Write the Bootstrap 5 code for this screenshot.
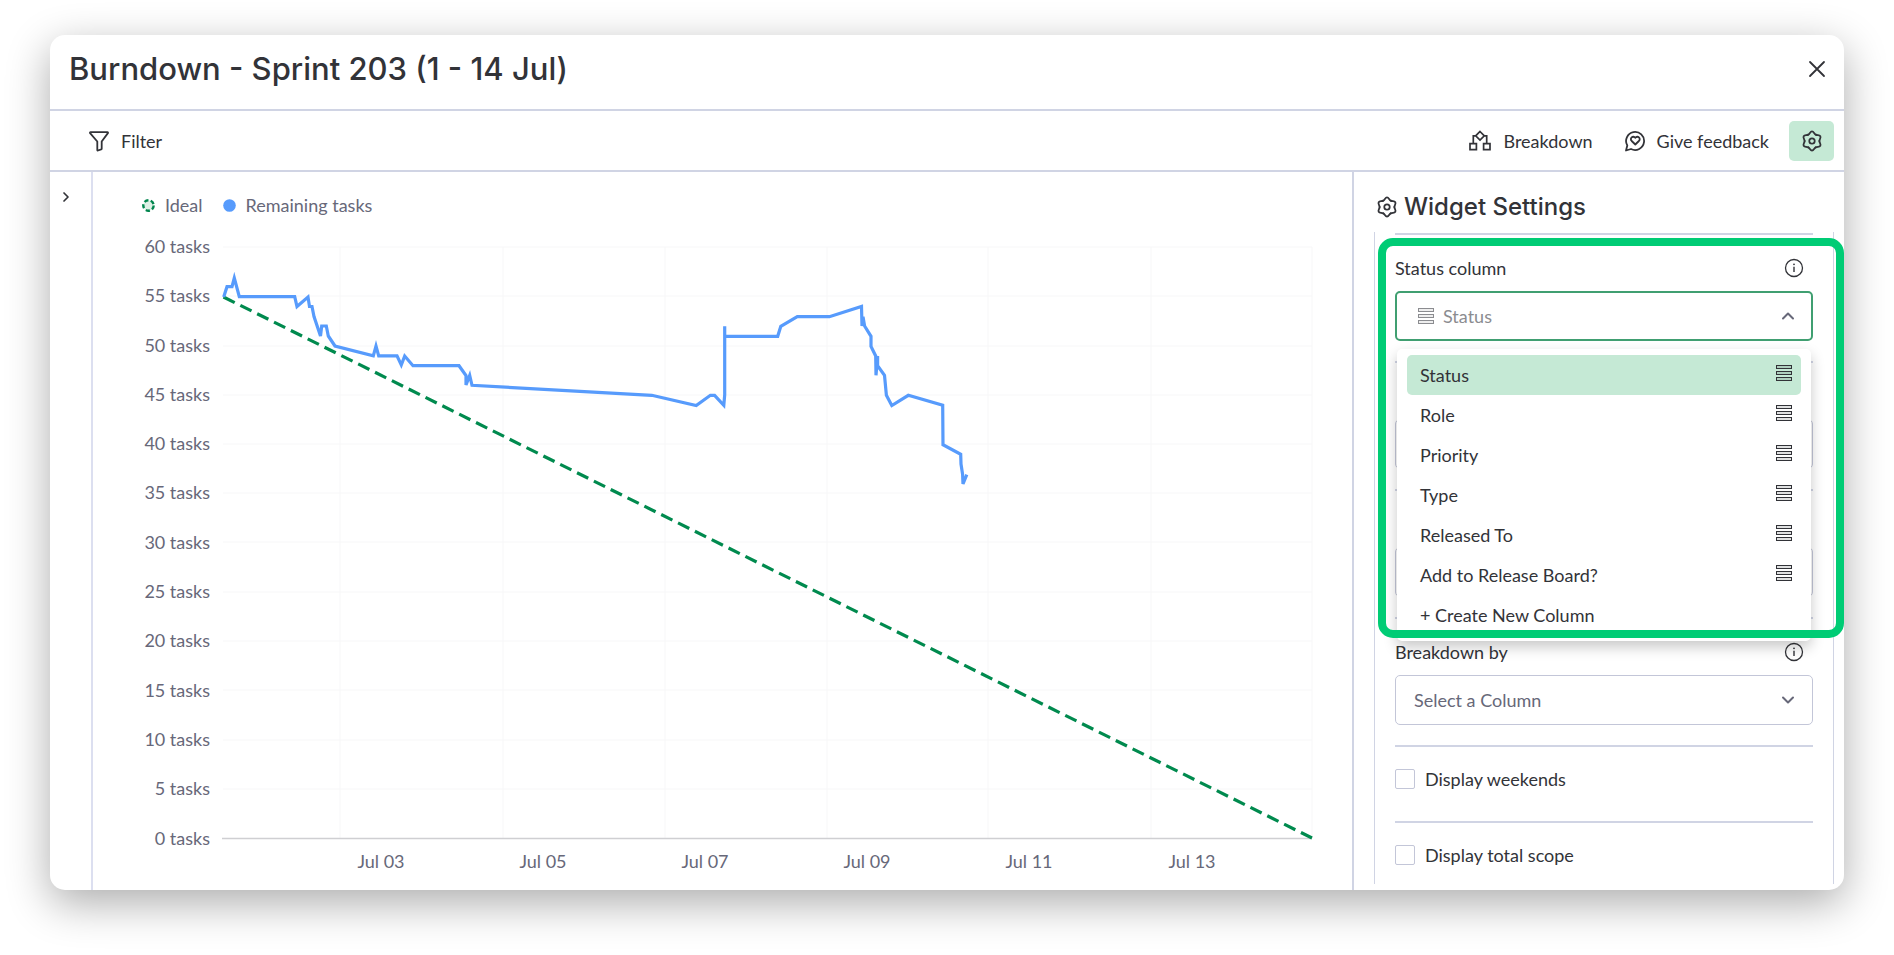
<!DOCTYPE html>
<html lang="en">
<head>
<meta charset="utf-8">
<meta name="viewport" content="width=device-width, initial-scale=1">
<title>Burndown - Sprint 203</title>
<link href="https://cdn.jsdelivr.net/npm/bootstrap@5.3.0/dist/css/bootstrap.min.css" rel="stylesheet">
<style>
  :root { --ink: #323338; --muted: #676879; --line: #d0d4e4; --line-strong: #c3c6d8; --pick: #c5e9d5; --ring: #00cc75; }
  body { font-family: Lato, "Open Sans", sans-serif; font-size: 18px; line-height: 22px; color: var(--ink); background: #fff; }
  .stage { min-height: 100vh; padding: 35px 50px 65px; }
  .widget { background: #fff; border-radius: 15px; box-shadow: 0 13px 44px rgba(0, 0, 0, .33); }
  .heading-font { font-family: Inter, "Open Sans", sans-serif; font-weight: 500; }
  .title-bar { padding: 0 17px 6px 19px; height: 76px; border-bottom: 2px solid var(--line); }
  .title-bar h1 { font-size: 31px; line-height: 40px; margin-bottom: 0; }
  .toolbar { padding: 10px 10px 9px 39px; border-bottom: 2px solid var(--line); }
  .plain { display: inline-flex; align-items: center; border: 0; padding: 0; background: none; color: inherit; }
  .tool-actions .plain { gap: 12px; }
  .gear-btn { width: 45px; height: 40px; border-radius: 5px; background: var(--pick); justify-content: center; }
  .rail { width: 43px; border-right: 2px solid #dcdff0; padding: 13px 10px; }
  .chart-pane { min-width: 0; flex-basis: 0; }
  .legend-row { padding: 22px 49px 14px; gap: 20px; color: var(--muted); }
  .legend-row span { display: flex; align-items: center; gap: 10px; }
  .chart-pane svg text { fill: var(--muted); font-size: 18px; }
  .settings { width: 492px; border-left: 2px solid var(--line); }
  .settings h2 { font-size: 24px; line-height: 30px; padding: 20px 20px 10px 22px; gap: 6px; }
  .scroll-box { margin: 0 10px 6px 20px; padding: 1px 20px 0; border: solid var(--line); border-width: 0 1px; }
  .field { position: relative; height: 128px; border-top: 2px solid var(--line); padding-top: 22px; }
  .field-label { padding-right: 9px; margin-bottom: 12px; }
  .field .form-select { height: 50px; border: 1px solid var(--line-strong); border-radius: 5px; padding: 0 40px 0 18px; font-size: 18px; line-height: 22px; color: var(--muted);
    background-image: url("data:image/svg+xml,%3csvg xmlns='http://www.w3.org/2000/svg' viewBox='0 0 14 14' fill='none' stroke='%23676879' stroke-width='2' stroke-linecap='round' stroke-linejoin='round'%3e%3cpath d='M2 4.500l5 5 5-5'/%3e%3c/svg%3e");
    background-size: 14px 14px; background-position: right 17px center; }
  .field .form-select.opened { border: 2px solid #409f71; padding-left: 46px; color: #8b8c90;
    background-image: url("data:image/svg+xml,%3csvg xmlns='http://www.w3.org/2000/svg' viewBox='0 0 14 14' fill='none' stroke='%23676879' stroke-width='2' stroke-linecap='round' stroke-linejoin='round'%3e%3cpath d='M2 9.500l5-5 5 5'/%3e%3c/svg%3e"); background-position: right 16px center; }
  .in-select { position: absolute; left: 23px; top: 73px; color: #8b8c90; }
  .dropdown-menu.picker { left: 2px; right: 2px; top: 114px; margin: 0; border: 0; border-radius: 5px; padding: 6px 10px 0; height: 292px; font-size: 18px; box-shadow: 0 6px 14px rgba(0, 0, 0, .22); overflow: hidden; }
  .picker .dropdown-item { display: flex; justify-content: space-between; align-items: flex-start; height: 40px; padding: 9px 9px 9px 13px; line-height: 22px; color: var(--ink); border-radius: 5px; }
  .picker .dropdown-item svg { margin-top: 1px; }
  .picker .dropdown-item.active { background: var(--pick); }
  .highlight { position: absolute; z-index: 1010; left: -17px; right: -31px; top: 3px; height: 400px; border: 8px solid var(--ring); border-radius: 15px; pointer-events: none; }
  .check-row { height: 76px; border-top: 2px solid var(--line); padding-top: 21px; gap: 10px; }
  .check-row:last-child { height: 62px; }
  .check-row .form-check-input { width: 20px; height: 20px; margin: 1px 0 0; border: 1px solid var(--line-strong); border-radius: 2px; }
</style>
<script src="https://cdn.jsdelivr.net/npm/bootstrap@5.3.0/dist/js/bootstrap.bundle.min.js"></script>
</head>
<body>
<svg width="0" height="0" class="position-absolute" aria-hidden="true">
  <defs>
    <path id="cog-lobe" d="M-3.700-6.400C-2-7.400-1.800-9.600 0-9.600S2-7.400 3.700-6.400"/>
    <symbol id="i-cog" viewBox="-11 -11 22 22">
      <g fill="none" stroke="currentColor" stroke-width="1.800" stroke-linecap="round">
        <use href="#cog-lobe"/><use href="#cog-lobe" transform="rotate(60)"/><use href="#cog-lobe" transform="rotate(120)"/>
        <use href="#cog-lobe" transform="rotate(180)"/><use href="#cog-lobe" transform="rotate(240)"/><use href="#cog-lobe" transform="rotate(300)"/>
        <circle r="2.700"/>
      </g>
    </symbol>
    <symbol id="i-rows" viewBox="0 0 16 16">
      <g fill="currentColor" fill-opacity=".15" stroke="currentColor" stroke-width="1">
        <rect x=".5" y=".5" width="15" height="3"/><rect x=".5" y="6.500" width="15" height="3"/><rect x=".5" y="12.500" width="15" height="3"/>
      </g>
    </symbol>
    <symbol id="i-info" viewBox="0 0 20 20">
      <circle cx="10" cy="10" r="8.500" fill="none" stroke="currentColor" stroke-width="1.300"/>
      <path d="M10 8.700v5.300" stroke="currentColor" stroke-width="1.400"/><circle cx="10" cy="6.300" r=".9" fill="currentColor"/>
    </symbol>
  </defs>
</svg>

<div class="stage d-flex flex-column">
  <main class="widget flex-grow-1 d-flex flex-column">
    <header class="title-bar d-flex align-items-center justify-content-between">
      <h1 class="heading-font">Burndown - Sprint 203 (1 - 14 Jul)</h1>
      <button class="plain" type="button" aria-label="Close">
        <svg width="20" height="20" viewBox="0 0 20 20" fill="none" stroke="currentColor" stroke-width="1.800" stroke-linecap="round"><path d="M3 3l14 14M17 3L3 17"/></svg>
      </button>
    </header>

    <div class="toolbar d-flex align-items-center justify-content-between">
      <button class="plain gap-2" type="button">
        <svg width="20" height="22" viewBox="0 0 20 22" fill="none" stroke="currentColor" stroke-width="1.800" stroke-linejoin="round"><path d="M1.500 2.200h17c.5 0 .7.500.4.900L12.700 11.500v7.200c0 .4-.2.600-.5.700l-3.200 1.100c-.4.100-.7-.1-.7-.5v-8.500L1.100 3.100c-.3-.4-.1-.9.400-.9z"/></svg>
        <span class="ms-1">Filter</span>
      </button>
      <div class="tool-actions d-flex align-items-center">
        <button class="plain me-4" type="button">
          <svg width="22" height="22" viewBox="0 0 22 22" fill="none" stroke="currentColor" stroke-width="1.700"><path d="M11 1.500l4.300 4.300L11 10.100 6.700 5.800zM6.700 5.800H4.300v7.800M15.300 5.800h2.400v7.800M1 13.600h6.400v6H1zM14.600 13.600H21v6h-6.400z"/></svg>
          <span>Breakdown</span>
        </button>
        <button class="plain ms-2 me-3" type="button">
          <svg width="20" height="22" viewBox="0 0 20 22" fill="none" stroke="currentColor" stroke-width="1.800" stroke-linecap="round" stroke-linejoin="round"><path d="M1 20.500l1.300-5A9 9 0 1 1 6 19z"/><path d="M10.300 14.500L6.700 11c-2.500-2.700 1.300-6 3.600-3.200 2.300-2.800 6.100.5 3.600 3.200z"/></svg>
          <span>Give feedback</span>
        </button>
        <button class="plain gear-btn ms-1" type="button" aria-label="Settings"><svg width="22" height="22"><use href="#i-cog"/></svg></button>
      </div>
    </div>

    <div class="d-flex flex-grow-1">
      <div class="rail">
        <button class="plain" type="button" aria-label="Expand">
          <svg width="12" height="12" viewBox="0 0 12 12" fill="none" stroke="currentColor" stroke-width="1.700" stroke-linecap="round" stroke-linejoin="round"><path d="M4 2l4 4-4 4"/></svg>
        </button>
      </div>

      <section class="chart-pane flex-grow-1">
        <div class="legend-row d-flex">
          <span><svg width="13" height="13" viewBox="0 0 13 13"><circle cx="6.500" cy="6.500" r="5.200" fill="#dff0e6" stroke="#00854d" stroke-width="2.400" stroke-dasharray="4.200 2.334"/></svg>Ideal</span>
          <span><svg width="13" height="13" viewBox="0 0 13 13"><circle cx="6.500" cy="6.500" r="6.300" fill="#579bfc"/></svg>Remaining tasks</span>
        </div>
        <svg class="d-block w-100" viewBox="93 230 1259 659" role="img" aria-label="Remaining tasks against the ideal line">
          <path d="M223 247H1312M223 296H1312M223 346H1312M223 395H1312M223 444H1312M223 493H1312M223 542H1312M223 592H1312M223 641H1312M223 690H1312M223 740H1312M223 789H1312M340 247V838M503 247V838M665 247V838M827 247V838M988 247V838M1151 247V838M1312 247V838" stroke="#f7f7f8" stroke-width="1" fill="none"/>
          <path d="M222 838.500H1312" stroke="#cfcfd2" stroke-width="1.500"/>
          <path d="M223.500 297L1312 838" stroke="#008a4e" stroke-width="3.200" stroke-dasharray="12.500 6.300"/>
          <polyline fill="none" stroke="#579bfc" stroke-width="3.200" points="223.700,297 227,286.700 232,286.700 234.300,278 239.300,296.700 294.700,296.700 297,306.500 308,297 309.500,306.500 312,306.500 314,316.500 320.500,336 321.700,326 326.300,326 328.300,336 335,346 373.300,355.800 376,346 378.700,355.800 397,355.800 401.300,365 404.700,356 413,365.700 459,365.700 466,375.500 466,385 469.700,375.500 472,385.300 651.800,395.300 696.200,405.500 710.400,395.300 714.600,395.300 723.800,405.300 724.700,395 724.700,326.300 724.700,336.300 777.700,336.300 780.800,326.300 797.300,316.700 829.400,316.700 861.500,306.500 862,326 863,316.700 864.600,326 871,336.300 871,346.500 875.700,356 876,375.300 877.600,356 877.600,365.700 884.500,375.300 886.400,395.300 891.800,405.500 908.300,395.300 942.700,405.300 943,444.700 960.700,454.300 961,464 962.600,474.300 963,484 966.800,474.700"/>
          <g text-anchor="end">
            <text x="210" y="253">60 tasks</text><text x="210" y="302">55 tasks</text><text x="210" y="352">50 tasks</text>
            <text x="210" y="401">45 tasks</text><text x="210" y="450">40 tasks</text><text x="210" y="499">35 tasks</text>
            <text x="210" y="549">30 tasks</text><text x="210" y="598">25 tasks</text><text x="210" y="647">20 tasks</text>
            <text x="210" y="697">15 tasks</text><text x="210" y="746">10 tasks</text><text x="210" y="795">5 tasks</text>
            <text x="210" y="845">0 tasks</text>
          </g>
          <g text-anchor="middle">
            <text x="381" y="868">Jul 03</text><text x="543" y="868">Jul 05</text><text x="705" y="868">Jul 07</text>
            <text x="867" y="868">Jul 09</text><text x="1029" y="868">Jul 11</text><text x="1192" y="868">Jul 13</text>
          </g>
        </svg>
      </section>

      <aside class="settings flex-shrink-0 d-flex flex-column">
        <h2 class="heading-font d-flex align-items-center mb-0"><svg width="22" height="22"><use href="#i-cog"/></svg>Widget Settings</h2>
        <form class="scroll-box flex-grow-1">
          <div class="field">
            <div class="field-label d-flex justify-content-between align-items-center">
              <label for="status-column">Status column</label><svg width="20" height="20"><use href="#i-info"/></svg>
            </div>
            <select id="status-column" class="form-select opened"><option>Status</option></select>
            <svg class="in-select" width="16" height="16"><use href="#i-rows"/></svg>
            <ul class="dropdown-menu picker show">
              <li><a class="dropdown-item active" href="#">Status<svg width="16" height="16"><use href="#i-rows"/></svg></a></li>
              <li><a class="dropdown-item" href="#">Role<svg width="16" height="16"><use href="#i-rows"/></svg></a></li>
              <li><a class="dropdown-item" href="#">Priority<svg width="16" height="16"><use href="#i-rows"/></svg></a></li>
              <li><a class="dropdown-item" href="#">Type<svg width="16" height="16"><use href="#i-rows"/></svg></a></li>
              <li><a class="dropdown-item" href="#">Released To<svg width="16" height="16"><use href="#i-rows"/></svg></a></li>
              <li><a class="dropdown-item" href="#">Add to Release Board?<svg width="16" height="16"><use href="#i-rows"/></svg></a></li>
              <li><a class="dropdown-item" href="#">+ Create New Column</a></li>
            </ul>
            <div class="highlight"></div>
          </div>
          <div class="field"><div class="field-label">&nbsp;</div><select class="form-select" aria-label="Second column"></select></div>
          <div class="field"><div class="field-label">&nbsp;</div><select class="form-select" aria-label="Third column"></select></div>
          <div class="field">
            <div class="field-label d-flex justify-content-between align-items-center">
              <label for="breakdown-by">Breakdown by</label><svg width="20" height="20"><use href="#i-info"/></svg>
            </div>
            <select id="breakdown-by" class="form-select"><option>Select a Column</option></select>
          </div>
          <div class="check-row d-flex">
            <input class="form-check-input" type="checkbox" id="weekends"><label for="weekends">Display weekends</label>
          </div>
          <div class="check-row d-flex">
            <input class="form-check-input" type="checkbox" id="scope"><label for="scope">Display total scope</label>
          </div>
        </form>
      </aside>
    </div>
  </main>
</div>
</body>
</html>
